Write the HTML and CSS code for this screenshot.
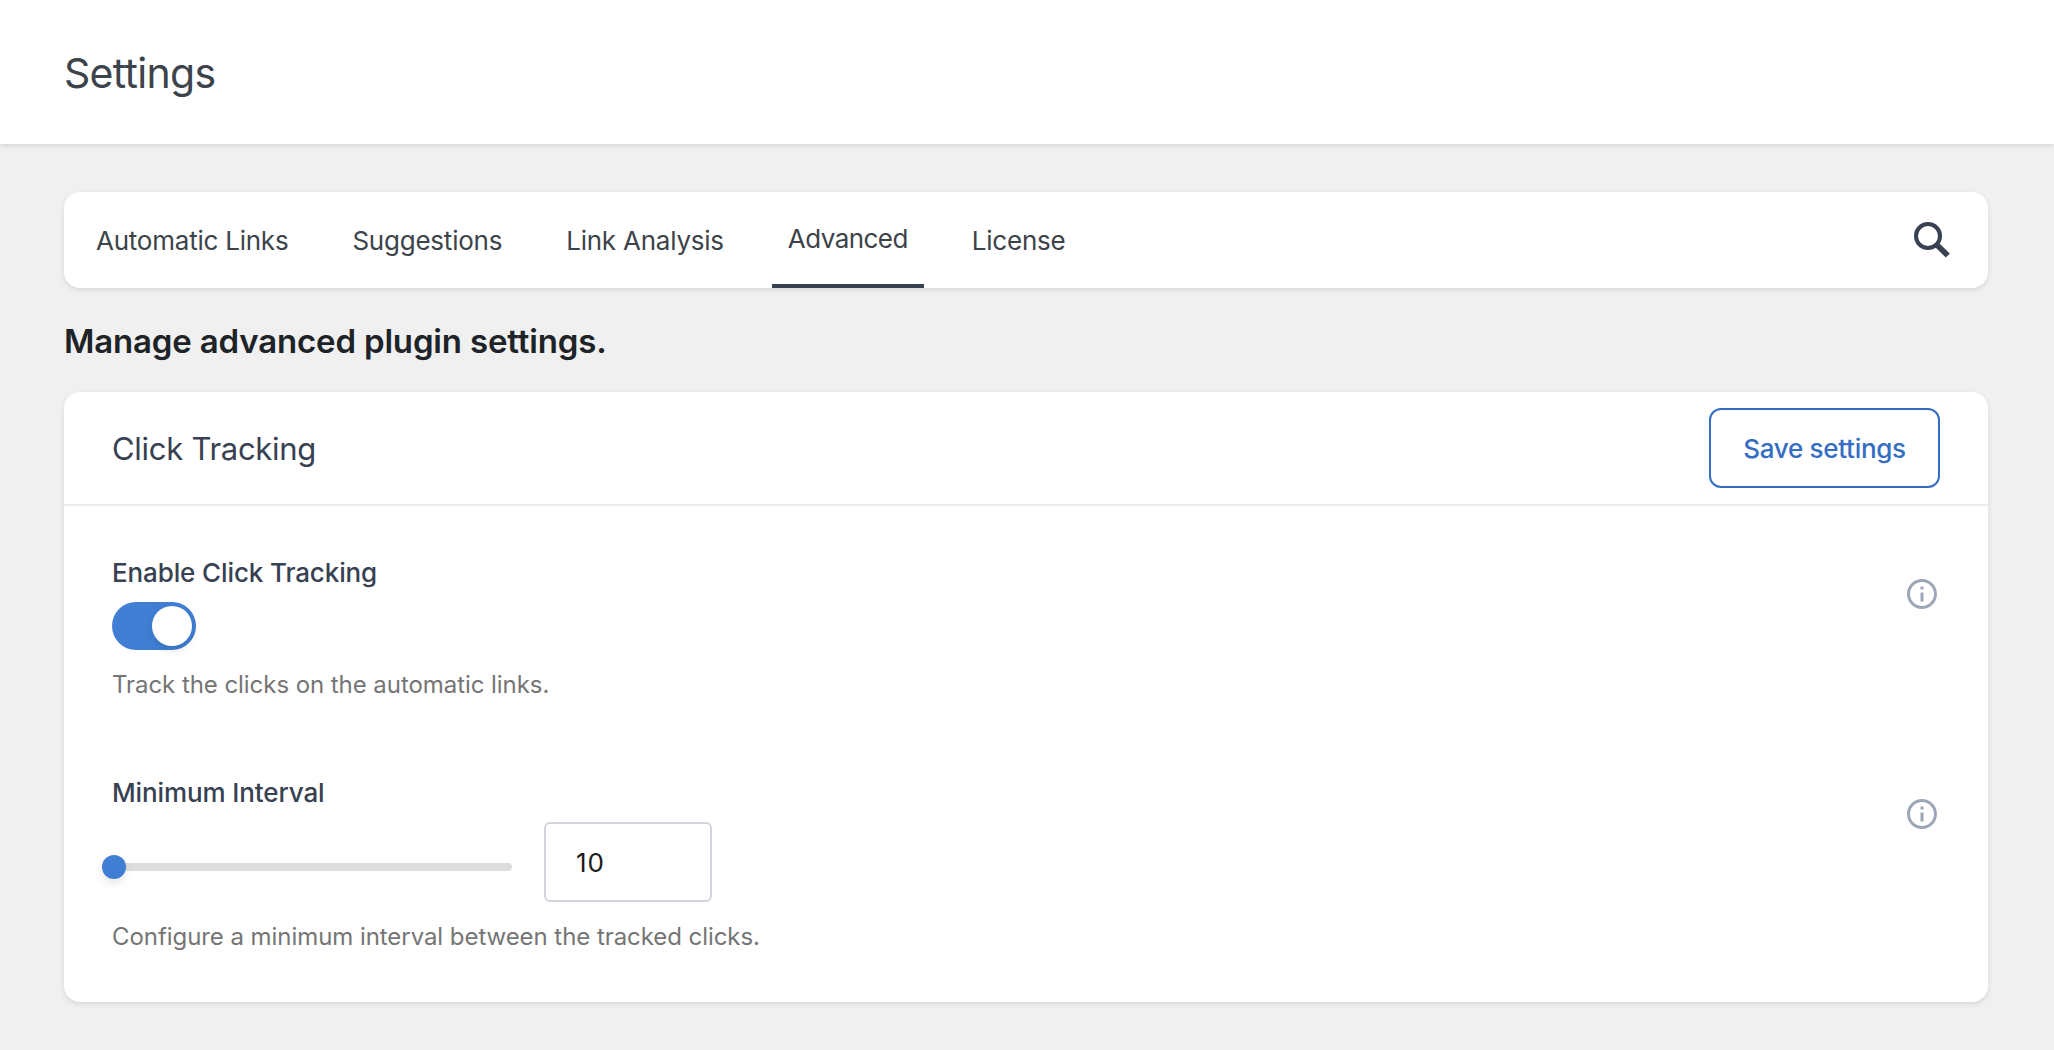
FILE: index.html
```html
<!DOCTYPE html>
<html lang="en">
<head>
  <meta charset="UTF-8">
  <meta name="viewport" content="width=device-width, initial-scale=1.0">
  <title>Settings</title>
  <link rel="stylesheet" href="styles.css">
</head>
<body>
  <header class="header">
    <h1>Settings</h1>
  </header>

  <main class="content">
    <nav class="tabs">
      <a class="tab">Automatic Links</a>
      <a class="tab">Suggestions</a>
      <a class="tab">Link Analysis</a>
      <a class="tab active">Advanced</a>
      <a class="tab">License</a>
      <svg class="search" viewBox="0 0 40 40">
        <circle cx="16" cy="16" r="12" fill="none" stroke="currentColor" stroke-width="4"/>
        <path d="M24 24L35.8 35.6" stroke="currentColor" stroke-width="5.6"/>
      </svg>
    </nav>

    <h2>Manage advanced plugin settings.</h2>

    <section class="card">
      <div class="card-header">
        <h3>Click Tracking</h3>
        <button class="save">Save settings</button>
      </div>
      <div class="card-body">
        <div class="row">
          <div class="field">
            <label class="label">Enable Click Tracking</label>
            <div class="toggle"><span class="knob"></span></div>
            <p class="description">Track the clicks on the automatic links.</p>
          </div>
          <svg class="info" viewBox="0 0 24 24">
            <path fill="currentColor" d="M11 7h2v2h-2zm0 4h2v6h-2zm1-9C6.48 2 2 6.48 2 12s4.48 10 10 10 10-4.48 10-10S17.52 2 12 2zm0 18c-4.41 0-8-3.59-8-8s3.59-8 8-8 8 3.59 8 8-3.59 8-8 8z"/>
          </svg>
        </div>
        <div class="row">
          <div class="field">
            <label class="label">Minimum Interval</label>
            <div class="range-row">
              <div class="slider"><span class="thumb"></span></div>
              <input class="number" type="text" value="10">
            </div>
            <p class="description">Configure a minimum interval between the tracked clicks.</p>
          </div>
          <svg class="info" viewBox="0 0 24 24">
            <path fill="currentColor" d="M11 7h2v2h-2zm0 4h2v6h-2zm1-9C6.48 2 2 6.48 2 12s4.48 10 10 10 10-4.48 10-10S17.52 2 12 2zm0 18c-4.41 0-8-3.59-8-8s3.59-8 8-8 8 3.59 8 8-3.59 8-8 8z"/>
          </svg>
        </div>
      </div>
    </section>
  </main>
</body>
</html>
```
FILE: styles.css
```css
* {
  box-sizing: border-box;
}
body {
  margin: 0;
  min-height: 100vh;
  background-color: #f0f0f0;
  color: #3c434a;
  font-family: Inter, "Liberation Sans", sans-serif;
  font-size: 26px;
}
h1, h2, h3, p {
  margin: 0;
}
.header {
  display: flex;
  align-items: center;
  height: 144px;
  padding: 2px 64px 0;
  background-color: #fff;
  box-shadow: 0 2px 6px rgba(0, 0, 0, 0.07), 0 2px 4px rgba(0, 0, 0, 0.04);
}
h1 {
  font-size: 41px;
  font-weight: 400;
  letter-spacing: -0.7px;
}
.content {
  padding: 48px 66px 48px 64px;
}
.tabs {
  display: flex;
  align-items: center;
  gap: 32px;
  height: 96px;
  padding: 0 36px 0 16px;
  background-color: #fff;
  border-radius: 16px;
  box-shadow: 0 2px 6px rgba(0, 0, 0, 0.07), 0 2px 4px rgba(0, 0, 0, 0.04);
}
.tab {
  height: 96px;
  padding: 0 16px;
  line-height: 98px;
  letter-spacing: -0.23px;
}
.tab.active {
  line-height: 94px;
  letter-spacing: -0.55px;
  border-bottom: 4px solid #374151;
}
.search {
  width: 40px;
  height: 40px;
  margin-left: auto;
  color: #374151;
}
h2 {
  padding: 33px 0 31px;
  font-size: 33px;
  font-weight: 600;
  line-height: 40px;
  letter-spacing: -0.17px;
  color: #1d2327;
}
.card {
  background-color: #fff;
  border-radius: 16px;
  box-shadow: 0 2px 6px rgba(0, 0, 0, 0.07), 0 2px 4px rgba(0, 0, 0, 0.04);
}
.card-header {
  display: flex;
  align-items: center;
  justify-content: space-between;
  padding: 16px 48px;
  border-bottom: 2px solid #ebecf0;
}
h3 {
  font-size: 31px;
  font-weight: 400;
  letter-spacing: -0.28px;
  color: #374151;
}
.save {
  width: 231px;
  height: 80px;
  padding: 0;
  border: 2px solid #346dc1;
  border-radius: 12px;
  background-color: #fff;
  color: #346dc1;
  font: 450 26px Inter, "Liberation Sans", sans-serif;
  letter-spacing: -0.28px;
}
.card-body {
  display: flex;
  flex-direction: column;
  gap: 72px;
  padding: 48px;
}
.row {
  display: flex;
  justify-content: space-between;
}
.label {
  display: block;
  margin-bottom: 10px;
  font-weight: 500;
  line-height: 38px;
  letter-spacing: -0.12px;
  color: #374151;
}
.toggle {
  display: flex;
  justify-content: flex-end;
  width: 84px;
  height: 48px;
  padding: 4px;
  border-radius: 24px;
  background-color: #407ed4;
}
.knob {
  width: 40px;
  height: 40px;
  border-radius: 50%;
  background-color: #fff;
  box-shadow: 0 4px 8px rgba(0, 0, 0, 0.1);
}
.description {
  margin-top: 16px;
  padding-top: 2px;
  font-size: 24px;
  line-height: 34px;
  letter-spacing: -0.06px;
  color: #757575;
}
.range-row {
  display: flex;
  align-items: center;
  gap: 32px;
}
.slider {
  display: flex;
  align-items: center;
  width: 400px;
  height: 8px;
  margin-top: 10px;
  border-radius: 4px;
  background-color: #ddd;
}
.thumb {
  width: 24px;
  height: 24px;
  margin-left: -10px;
  border-radius: 50%;
  background-color: #407ed4;
  box-shadow: 0 4px 8px rgba(0, 0, 0, 0.1);
}
.number {
  width: 168px;
  height: 80px;
  padding: 0 30px;
  border: 2px solid #d1d5db;
  border-radius: 6px;
  color: #1a1a1a;
  font: 26px Inter, "Liberation Sans", sans-serif;
  letter-spacing: 0.8px;
}
.info {
  width: 36px;
  height: 36px;
  margin-top: 22px;
  color: #9ba6b7;
}
```
